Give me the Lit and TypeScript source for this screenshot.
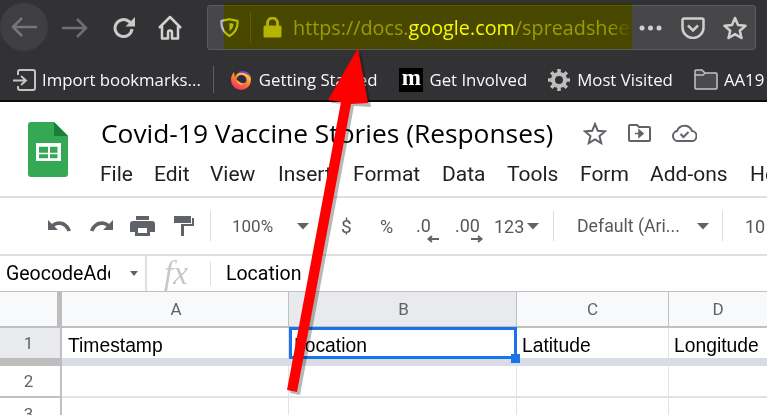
import { LitElement, html, css, svg } from 'lit'
import { customElement } from 'lit/decorators.js'

const caret = html`<svg class="caret" width="12" height="7" viewBox="0 0 12 7"><path d="M0 0h12L6 6.500z" fill="#5f6368"/></svg>`

@customElement('app-root')
export class AppRoot extends LitElement {
  static styles = css`
    :host {
      display: block;
      position: relative;
      width: 767px;
      height: 415px;
      overflow: hidden;
      background: #fff;
      font-family: Roboto, sans-serif;
    }

    /* browser chrome */
    .chrome {
      height: 100px;
      background: #323234;
      border-bottom: 2px solid #0c0c0d;
      font-family: 'Open Sans', sans-serif;
    }
    .nav {
      height: 55px;
      display: flex;
      align-items: center;
    }
    .nav svg { flex: none; }
    .back {
      width: 48px;
      height: 48px;
      margin-top: -1px;
      border-radius: 50%;
      background: #3f3f41;
      display: flex;
      align-items: center;
      justify-content: center;
      flex: none;
    }
    .forward { margin-left: 14px; }
    .reload { margin-left: 24px; }
    .home { margin-left: 21px; }
    .urlbar {
      margin-left: 24px;
      width: 549px;
      height: 45px;
      box-sizing: border-box;
      background: #474749;
      border: 1px solid #5b5b5d;
      border-radius: 3px;
      display: flex;
      align-items: center;
      flex: none;
    }
    .shield { margin-left: 12px; }
    .urlsep {
      width: 1px;
      height: 31px;
      margin-left: 11px;
      background: #5f5f61;
      flex: none;
    }
    .lock { margin-left: 12px; }
    .url {
      margin-left: 11px;
      width: 336px;
      flex: none;
      font-size: 19.8px;
      line-height: 28px;
      color: #9c9c9e;
      white-space: nowrap;
      overflow: hidden;
      -webkit-mask-image: linear-gradient(to right, #000 94%, rgba(0, 0, 0, 0.25) 99%);
      mask-image: linear-gradient(to right, #000 94%, rgba(0, 0, 0, 0.25) 99%);
    }
    .url b {
      font-weight: 400;
      color: #f9f9fa;
    }
    .dots { margin-left: 10px; }
    .pocket { margin-left: 19px; }
    .star { margin-left: 18px; }

    .bookmarks {
      height: 45px;
      box-sizing: border-box;
      padding-top: 4px;
      display: flex;
      align-items: center;
      color: #f9f9fa;
      font-size: 16.8px;
      white-space: nowrap;
    }
    .bookmarks svg { flex: none; }
    .bm-import { margin-left: 12px; margin-right: 6px; }
    .bm-sep {
      width: 1px;
      height: 27px;
      margin: 0 16px 0 12px;
      background: #5f5f61;
      flex: none;
    }
    .bm-fx { margin-right: 7px; }
    .bm-m {
      margin-left: 22px;
      margin-right: 6px;
      width: 24px;
      height: 24px;
      background: #000;
      color: #fff;
      font-family: 'Liberation Serif', serif;
      font-weight: 700;
      font-size: 23px;
      line-height: 20px;
      text-align: center;
      flex: none;
    }
    .bm-gear { margin-left: 21px; margin-right: 7px; }
    .bm-folder { margin-left: 21px; margin-right: 6px; }

    /* docs header */
    .docs {
      height: 94px;
      display: flex;
      border-bottom: 2px solid #e0e0e0;
    }
    .sheets-logo { margin: 20px 0 0 28px; flex: none; }
    .docs-main { margin-left: 32px; }
    .title-row {
      height: 44px;
      display: flex;
      align-items: center;
      margin-top: 9px;
    }
    .title-row svg { flex: none; }
    .title {
      font-family: 'Open Sans', sans-serif;
      font-size: 26.35px;
      color: #000;
      white-space: nowrap;
      width: 455px;
      flex: none;
      margin-left: 1px;
    }
    .t-star { margin-left: 27px; }
    .t-move { margin-left: 21px; }
    .t-cloud { margin-left: 21px; }
    .menu {
      display: flex;
      margin-top: 5px;
      font-size: 21px;
      line-height: 28px;
      color: #202124;
      white-space: nowrap;
    }
    .menu span { flex: none; }
    .m-file { width: 54px; }
    .m-edit { width: 56px; }
    .m-view { width: 68px; }
    .m-insert { width: 75px; }
    .m-format { width: 89px; }
    .m-data { width: 65px; }
    .m-tools { width: 73px; }
    .m-form { width: 70px; }
    .m-addons { width: 100px; }

    /* toolbar */
    .toolbar {
      height: 56px;
      display: flex;
      align-items: center;
      border-bottom: 2px solid #e0e0e0;
      font-size: 17px;
      color: #55585c;
      white-space: nowrap;
    }
    .toolbar > * { flex: none; }
    .tb-undo { margin-left: 47px; }
    .tb-redo { margin-left: 17px; }
    .tb-print { margin-left: 16px; }
    .tb-paint { margin-left: 19px; }
    .tb-sep {
      width: 1px;
      height: 30px;
      background: #dadce0;
    }
    .s1 { margin-left: 16px; }
    .zoom { margin-left: 21px; width: 65px; }
    .caret { display: block; flex: none; }
    .s2 { margin-left: 14px; }
    .dollar { margin-left: 17px; width: 39px; font-size: 19px; }
    .percent { width: 36px; font-size: 18px; }
    .dec {
      position: relative;
      height: 30px;
      line-height: 30px;
      font-size: 18px;
    }
    .dec svg { position: absolute; top: 24px; }
    .dec0 { width: 39px; }
    .dec0 svg { left: 11px; }
    .dec00 { width: 39px; }
    .dec00 svg { left: 16px; }
    .num { width: 33px; font-size: 18px; }
    .s3 { margin-left: 14px; }
    .font { margin-left: 23px; width: 120px; font-size: 17.7px; }
    .s4 { margin-left: 13px; }
    .size { margin-left: 22px; font-size: 18px; }

    /* formula bar */
    .formula {
      height: 35px;
      display: flex;
      align-items: center;
      font-size: 19.5px;
      color: #000;
      white-space: nowrap;
    }
    .formula > * { flex: none; }
    .namebox {
      width: 104px;
      margin-left: 6px;
      overflow: hidden;
    }
    .fcaret { margin-left: 20px; }
    .fsep1 {
      width: 2px;
      height: 35px;
      margin-left: 7px;
      background: #e0e0e0;
    }
    .fx {
      margin-left: 17px;
      width: 46px;
      font-family: 'Liberation Serif', serif;
      font-style: italic;
      font-size: 33px;
      line-height: 35px;
      color: #c8c8c8;
    }
    .fsep2 {
      width: 1px;
      height: 25px;
      background: #e0e0e0;
    }
    .fvalue { margin-left: 15px; }

    /* grid */
    .grid {
      display: grid;
      grid-template-columns: 57px 3px 2px 226px 1px 227px 1px 151px 1px 98px;
      grid-template-rows: 1px 34px 2px 30px 8px 30px 2px 31px;
      font-family: 'Liberation Sans', sans-serif;
      font-size: 19.3px;
      color: #000;
      background: #fff;
    }
    .rule { background: #c0c0c0; }
    .line { background: #e2e2e2; }
    .freeze { background: #bdbdbd; }
    .band { background: #dadce3; }
    .corner { background: #f8f9fa; }
    .col {
      background: #f8f9fa;
      color: #5f6368;
      font-family: Roboto, sans-serif;
      font-size: 17px;
      display: flex;
      align-items: center;
      justify-content: center;
    }
    .col.active { background: #e8eaed; }
    .col.nudge { padding-left: 2px; }
    .row-head {
      background: #fff;
      color: #5f6368;
      font-family: Roboto, sans-serif;
      font-size: 17px;
      display: flex;
      align-items: center;
      justify-content: center;
    }
    .row-head.active { background: #e8eaed; }
    .head-fill { background: #fff; }
    .head-fill.active { background: #e8eaed; }
    .cell {
      padding-left: 5px;
      line-height: 35px;
      white-space: nowrap;
      overflow: hidden;
    }
    .cell.first { padding-left: 6px; }
    .span-all { grid-column: 1 / -1; }
    .span-side { grid-column: 1 / 4; }
    .span-freeze { grid-column: 2 / 4; }
    .wide { grid-column: 4 / -1; }

    .selection {
      position: absolute;
      left: 289px;
      top: 327px;
      width: 228px;
      height: 32px;
      box-sizing: border-box;
      border: 3px solid #1a73e8;
    }
    .handle {
      position: absolute;
      right: -6px;
      bottom: -7px;
      width: 9px;
      height: 9px;
      background: #1a73e8;
    }

    /* annotation layers */
    .highlight {
      position: absolute;
      left: 224px;
      top: 3px;
      width: 408px;
      height: 46px;
      background: #ffff00;
      mix-blend-mode: multiply;
    }
    .arrow {
      position: absolute;
      left: 0;
      top: 0;
      pointer-events: none;
    }
  `

  private _chrome() {
    return html`
      <div class="chrome">
        <div class="nav">
          <div class="back">
            <svg width="26" height="20" viewBox="0 0 26 20"><path d="M11 1 2 10l9 9M2 10h24" fill="none" stroke="#77777a" stroke-width="2.500"/></svg>
          </div>
          <svg class="forward" width="26" height="20" viewBox="0 0 26 20"><path d="M15 1l9 9-9 9M24 10H0" fill="none" stroke="#6f6f71" stroke-width="2.500"/></svg>
          <svg class="reload" width="24" height="24" viewBox="0 0 24 24"><path d="M20 13a8.500 8.500 0 1 1-3-7.500l3.500 3" fill="none" stroke="#c9c9ca" stroke-width="3"/><path d="M23 1v9.500h-9.500z" fill="#c9c9ca"/></svg>
          <svg class="home" width="26" height="26" viewBox="0 0 26 26"><path d="M2 13 13 2l11 11M5 11v12.500h6v-6a2 2 0 0 1 4 0v6h6V11" fill="none" stroke="#d2d2d3" stroke-width="2.500" stroke-linejoin="round"/></svg>
          <div class="urlbar">
            <svg class="shield" width="19" height="19" viewBox="0 0 19 19"><path d="M9.500 1.200 17.500 3c.6 6.500-2 11.500-8 15C3.500 14.500.9 9.500 1.500 3z" fill="none" stroke="#bdbdbe" stroke-width="2.200"/><path d="M9.500 5l4 .8c0 3-1.200 5.200-4 7.200z" fill="#bdbdbe"/></svg>
            <div class="urlsep"></div>
            <svg class="lock" width="19" height="21" viewBox="0 0 19 21"><path d="M4.500 9V6a5 5 0 0 1 10 0v3" fill="none" stroke="#b4b4b5" stroke-width="2.800"/><rect x="0.500" y="8.500" width="18" height="12" rx="1.500" fill="#b4b4b5"/></svg>
            <div class="url">https://docs.<b>google.com</b>/spreadshee</div>
            <svg class="dots" width="23" height="6" viewBox="0 0 23 6"><circle cx="3" cy="3" r="2.500" fill="#d0d0d1"/><circle cx="11.500" cy="3" r="2.500" fill="#d0d0d1"/><circle cx="20" cy="3" r="2.500" fill="#d0d0d1"/></svg>
            <svg class="pocket" width="24" height="22" viewBox="0 0 24 22"><path d="M3 1.500h18A1.500 1.500 0 0 1 22.500 3v7.500a10.500 10.500 0 0 1-21 0V3A1.500 1.500 0 0 1 3 1.500z" fill="none" stroke="#cfcfd0" stroke-width="2.500"/><path d="M7 8.500l5 5 5-5" fill="none" stroke="#cfcfd0" stroke-width="2.500"/></svg>
            <svg class="star" width="24" height="24" viewBox="0 0 24 24"><path d="M12 2l3 7 7.500.7-5.700 5 1.700 7.300-6.500-3.900L5.500 22l1.700-7.300-5.700-5L9 9z" fill="none" stroke="#cfcfd0" stroke-width="2.500" stroke-linejoin="round"/></svg>
          </div>
        </div>
        <div class="bookmarks">
          <svg class="bm-import" width="24" height="22" viewBox="0 0 24 22"><path d="M6 6V3a2 2 0 0 1 2-2h13a2 2 0 0 1 2 2v16a2 2 0 0 1-2 2H8a2 2 0 0 1-2-2v-2" fill="none" stroke="#c4c4c5" stroke-width="2"/><path d="M1 11.500h12M9 7l5 4.500L9 16" fill="none" stroke="#c4c4c5" stroke-width="2"/></svg>
          <span>Import bookmarks...</span>
          <div class="bm-sep"></div>
          <svg class="bm-fx" width="22" height="22" viewBox="0 0 22 22">
            <defs><linearGradient id="fxg" x1="0.800" y1="0.100" x2="0.300" y2="1"><stop offset="0" stop-color="#ffd23f"/><stop offset="0.500" stop-color="#ff7a2f"/><stop offset="1" stop-color="#f5286e"/></linearGradient></defs>
            <path d="M4 3C1.500 6 1 8.500 1 11a10 10 0 0 0 20 0c0-2-.5-3.500-1-4.500C18 3 15 2.500 12 3 8 3.500 5 6 5 9z" fill="url(#fxg)"/>
            <path d="M8 3.500C12 .5 19 2 20.800 9 18 4.500 13 3.500 8 3.500z" fill="#7b3bd8"/>
            <circle cx="11.500" cy="11" r="5" fill="#2f2a4a"/>
            <path d="M6.500 10.500a5 5 0 0 0 9.500 2.500 5.500 5.500 0 0 1-7-.500z" fill="#ffb03a"/>
          </svg>
          <span>Getting Started</span>
          <div class="bm-m">m</div>
          <span>Get Involved</span>
          <svg class="bm-gear" width="22" height="22" viewBox="0 0 22 22"><circle cx="11" cy="11" r="6" fill="none" stroke="#bdbdbe" stroke-width="4"/><path d="M11 0v5M11 17v5M0 11h5M17 11h5M3.200 3.200l3.500 3.500M15.300 15.300l3.500 3.500M3.200 18.800l3.500-3.500M15.300 6.700l3.500-3.500" stroke="#bdbdbe" stroke-width="3.500"/></svg>
          <span>Most Visited</span>
          <svg class="bm-folder" width="24" height="21" viewBox="0 0 24 21"><path d="M1 18V2a1 1 0 0 1 1-1h6l3 3h11a1 1 0 0 1 1 1v14a1 1 0 0 1-1 1H2a1 1 0 0 1-1-1zM1 6h8l2-2" fill="#4a4a4c" stroke="#c4c4c5" stroke-width="1.500"/></svg>
          <span>AA19</span>
        </div>
      </div>
    `
  }

  private _docs() {
    return html`
      <div class="docs">
        <svg class="sheets-logo" width="40" height="55" viewBox="0 0 40 55">
          <path d="M3 0h23l14 14v38a3 3 0 0 1-3 3H3a3 3 0 0 1-3-3V3a3 3 0 0 1 3-3z" fill="#34a853"/>
          <path d="M26 0l14 14H26z" fill="#188038"/>
          <path d="M8 21h25v18H8zM11 24.700v6h9v-6zM22 24.700v6h7.500v-6zM11 32.300v4h9v-4zM22 32.300v4h7.500v-4z" fill="#fff" fill-rule="evenodd"/>
        </svg>
        <div class="docs-main">
          <div class="title-row">
            <div class="title">Covid-19 Vaccine Stories (Responses)</div>
            <svg class="t-star" width="24" height="23" viewBox="0 0 24 23"><path d="M12 2l2.800 6.800 7.200.6-5.500 4.700 1.700 7-6.200-3.700-6.200 3.700 1.700-7L2 9.400l7.200-.6z" fill="none" stroke="#5f6368" stroke-width="2"/></svg>
            <svg class="t-move" width="23" height="19" viewBox="0 0 23 19"><path d="M1 16V2a1 1 0 0 1 1-1h7l2 2h10a1 1 0 0 1 1 1v12a1 1 0 0 1-1 1H2a1 1 0 0 1-1-1z" fill="none" stroke="#5f6368" stroke-width="2"/><path d="M7 9.500h6M11 6l4 3.500-4 3.500z" fill="#5f6368" stroke="#5f6368" stroke-width="1.500"/></svg>
            <svg class="t-cloud" width="25" height="18" viewBox="0 0 25 18"><path d="M6 17a5 5 0 0 1-1-9.900A8 8 0 0 1 20 7a5 5 0 0 1-1 10z" fill="none" stroke="#5f6368" stroke-width="2"/><path d="M8.500 10l3 3 5-5" fill="none" stroke="#5f6368" stroke-width="2"/></svg>
          </div>
          <div class="menu">
            <span class="m-file">File</span>
            <span class="m-edit">Edit</span>
            <span class="m-view">View</span>
            <span class="m-insert">Insert</span>
            <span class="m-format">Format</span>
            <span class="m-data">Data</span>
            <span class="m-tools">Tools</span>
            <span class="m-form">Form</span>
            <span class="m-addons">Add-ons</span>
            <span>Help</span>
          </div>
        </div>
      </div>
    `
  }

  private _toolbar() {
    return html`
      <div class="toolbar">
        <svg class="tb-undo" width="25" height="12" viewBox="0 0 25 12"><path d="M1 0v10h10L7.500 6.500C12 3.500 18 5 20.500 11.500L24 10.500C21 1.500 11-1.500 5 4z" fill="#5f6368"/></svg>
        <svg class="tb-redo" width="25" height="12" viewBox="0 0 25 12"><path d="M24 0v10H14l3.500-3.500C13 3.500 7 5 4.500 11.500L1 10.500C4 1.500 14-1.500 20 4z" fill="#5f6368"/></svg>
        <svg class="tb-print" width="25" height="20" viewBox="0 0 25 20"><path d="M6 0h13v4H6zM3 5h19a3 3 0 0 1 3 3v8h-5v4H5v-4H0V8a3 3 0 0 1 3-3zM8 12v5h9v-5z" fill="#5f6368" fill-rule="evenodd"/></svg>
        <svg class="tb-paint" width="20" height="20" viewBox="0 0 20 20"><path d="M0 0h17v7H0zM18 2h2v8H10v10H7V8h11z" fill="#5f6368"/></svg>
        <div class="tb-sep s1"></div>
        <div class="zoom">100%</div>
        ${caret}
        <div class="tb-sep s2"></div>
        <div class="dollar">$</div>
        <div class="percent">%</div>
        <div class="dec dec0">.0<svg width="12" height="8" viewBox="0 0 12 8"><path d="M12 4H3M5 1 1.500 4 5 7" fill="none" stroke="#5f6368" stroke-width="2"/></svg></div>
        <div class="dec dec00">.00<svg width="12" height="8" viewBox="0 0 12 8"><path d="M0 4h9M7 1l3.500 3L7 7" fill="none" stroke="#5f6368" stroke-width="2"/></svg></div>
        <div class="num">123</div>
        ${caret}
        <div class="tb-sep s3"></div>
        <div class="font">Default (Ari...</div>
        ${caret}
        <div class="tb-sep s4"></div>
        <div class="size">10</div>
      </div>
    `
  }

  private _formula() {
    return html`
      <div class="formula">
        <div class="namebox">GeocodeAdd</div>
        <svg class="fcaret" width="8" height="5" viewBox="0 0 8 5"><path d="M0 0h8L4 5z" fill="#5f6368"/></svg>
        <div class="fsep1"></div>
        <div class="fx">fx</div>
        <div class="fsep2"></div>
        <div class="fvalue">Location</div>
      </div>
    `
  }

  private _grid() {
    return html`
      <div class="grid">
        <div class="rule span-all"></div>

        <div class="corner"></div><div class="freeze span-freeze"></div>
        <div class="col nudge">A</div><div class="rule"></div>
        <div class="col active nudge">B</div><div class="rule"></div>
        <div class="col">C</div><div class="rule"></div>
        <div class="col">D</div>

        <div class="rule span-all"></div>

        <div class="row-head active">1</div><div class="head-fill active"></div><div class="rule"></div>
        <div class="cell first">Timestamp</div><div class="line"></div>
        <div class="cell">Location</div><div class="line"></div>
        <div class="cell">Latitude</div><div class="line"></div>
        <div class="cell">Longitude</div>

        <div class="freeze span-side"></div>
        <div class="band wide"></div>

        <div class="row-head">2</div><div class="head-fill"></div><div class="rule"></div>
        <div></div><div class="line"></div>
        <div></div><div class="line"></div>
        <div></div><div class="line"></div>
        <div></div>

        <div class="rule span-side"></div>
        <div class="line wide"></div>

        <div class="row-head">3</div><div class="head-fill"></div><div class="rule"></div>
        <div></div><div class="line"></div>
        <div></div><div class="line"></div>
        <div></div><div class="line"></div>
        <div></div>
      </div>
    `
  }

  render() {
    return html`
      ${this._chrome()}
      ${this._docs()}
      ${this._toolbar()}
      ${this._formula()}
      ${this._grid()}
      <div class="selection"><div class="handle"></div></div>
      <div class="highlight"></div>
      <svg class="arrow" width="767" height="415" viewBox="0 0 767 415">
        ${svg`<path d="M361 52 371 107 354 106 300 395 290 393 344 104 331 103z" fill="#000" opacity=".28"/>`}
        ${svg`<path d="M358 48 368 103 351 104 297 392 287 390 341 102 328 100z" fill="#f00"/>`}
      </svg>
    `
  }
}
